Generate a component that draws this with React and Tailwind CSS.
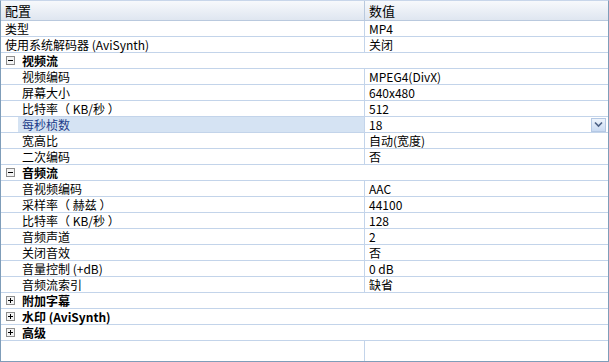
import React from 'react';

const rows = [
  { type: 'item', label: '类型', value: 'MP4', top: true },
  { type: 'item', label: '使用系统解码器 (AviSynth)', value: '关闭', top: true },
  { type: 'cat', label: '视频流', open: true },
  { type: 'item', label: '视频编码', value: 'MPEG4(DivX)' },
  { type: 'item', label: '屏幕大小', value: '640x480' },
  { type: 'item', label: '比特率（ KB/秒 ）', value: '512' },
  { type: 'item', label: '每秒桢数', value: '18', selected: true },
  { type: 'item', label: '宽高比', value: '自动(宽度)' },
  { type: 'item', label: '二次编码', value: '否' },
  { type: 'cat', label: '音频流', open: true },
  { type: 'item', label: '音视频编码', value: 'AAC' },
  { type: 'item', label: '采样率（ 赫兹 ）', value: '44100' },
  { type: 'item', label: '比特率（ KB/秒 ）', value: '128' },
  { type: 'item', label: '音频声道', value: '2' },
  { type: 'item', label: '关闭音效', value: '否' },
  { type: 'item', label: '音量控制 (+dB)', value: '0 dB' },
  { type: 'item', label: '音频流索引', value: '缺省' },
  { type: 'cat', label: '附加字幕', open: false },
  { type: 'cat', label: '水印 (AviSynth)', open: false },
  { type: 'cat', label: '高级', open: false },
];

function ExpandBox({ open }) {
  return (
    <svg width="9" height="9" viewBox="0 0 9 9" className="shrink-0">
      <rect x="0.5" y="0.5" width="8" height="8" fill="#f4f4f4" stroke="#8c8c8c" />
      <path d="M2 4.5H7" stroke="#000" />
      {!open && <path d="M4.5 2V7" stroke="#000" />}
    </svg>
  );
}

export default function App() {
  return (
    <div
      className="w-[609px] h-[362px] bg-white border border-[#7f9db9] border-t-[#c8d6ea] flex flex-col text-[12px] text-black overflow-hidden"
      style={{ fontFamily: '"Noto Sans CJK SC", "Noto Sans", sans-serif' }}
    >
      {/* Header */}
      <div className="flex h-[20px] shrink-0 bg-gradient-to-b from-[#f7f9fc] to-[#dfe6f0] border-b border-[#b9c9de]">
        <div className="w-[364px] border-r border-[#b9c9de] pl-[4px] leading-[19px] text-[13px]">配置</div>
        <div className="flex-1 pl-[4px] leading-[19px] text-[13px]">数值</div>
      </div>

      {rows.map((r, i) => {
        if (r.type === 'cat') {
          return (
            <div key={i} className="flex items-center h-[16px] shrink-0 border-b border-[#c3d4ea] pl-[5px] gap-[7px]">
              <ExpandBox open={r.open} />
              <span className="font-bold leading-[15px]">{r.label}</span>
            </div>
          );
        }
        return (
          <div key={i} className="flex h-[16px] shrink-0 border-b border-[#c3d4ea]">
            <div className={`w-[364px] border-r border-[#c3d4ea] flex ${r.top ? 'pl-[4px]' : 'pl-[17px]'}`}>
              <div className={`flex-1 leading-[15px] whitespace-pre ${r.selected ? 'bg-[#d5e3f3] text-[#1e3d8a]' : ''} ${r.top ? '' : 'pl-[4px]'}`}>
                {r.label}
              </div>
            </div>
            <div className="flex-1 flex items-center pl-[4px] pr-[2px]">
              <span className="flex-1 leading-[15px] whitespace-pre">{r.value}</span>
              {r.selected && (
                <div className="w-[15px] h-[14px] border border-[#b4c8e4] bg-gradient-to-b from-[#eef4fc] to-[#c9daf2] flex items-center justify-center">
                  <svg width="9" height="7" viewBox="0 0 9 7">
                    <path d="M1 1.5L4.5 5L8 1.5" fill="none" stroke="#4d6185" strokeWidth="1.6" />
                  </svg>
                </div>
              )}
            </div>
          </div>
        );
      })}

      {/* Empty area */}
      <div className="flex flex-1">
        <div className="w-[364px] border-r border-[#c3d4ea]" />
        <div className="flex-1" />
      </div>
    </div>
  );
}
